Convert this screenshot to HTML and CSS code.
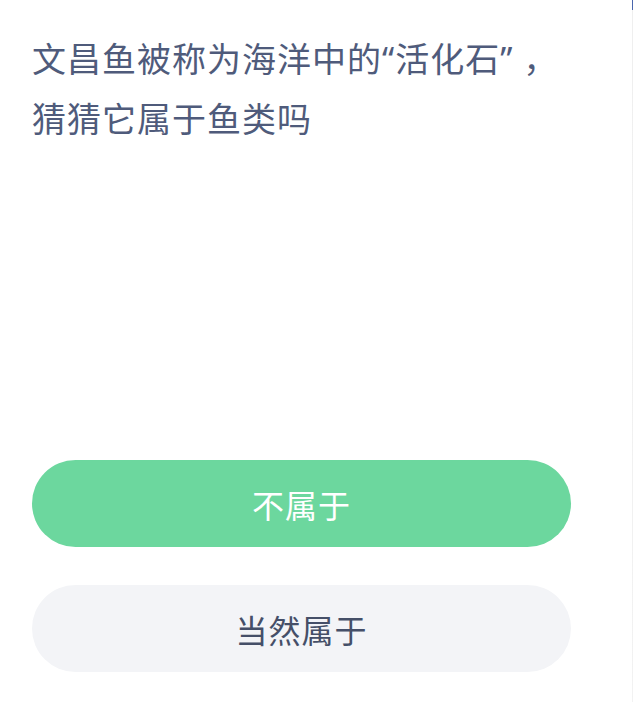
FILE: index.html
```html
<!DOCTYPE html>
<html lang="zh-CN">
<head>
<meta charset="utf-8">
<title>文昌鱼</title>
<link rel="stylesheet" href="styles.css">
</head>
<body>
<div class="page">
  <main class="main">
    <h1 class="question">文昌鱼被称为海洋中的“活化石” <span class="punct">，</span><br>猜猜它属于鱼类吗</h1>
    <div class="answers">
      <button class="answer answer-primary">不属于</button>
      <button class="answer answer-secondary">当然属于</button>
    </div>
  </main>
  <div class="edge"></div>
</div>
</body>
</html>
```
FILE: styles.css
```css
html, body {
  margin: 0;
  padding: 0;
  background: #ffffff;
}
body {
  font-family: "Noto Sans CJK SC", "Noto Sans", sans-serif;
}
.page {
  display: flex;
  min-height: 702px;
}
.main {
  flex: 1;
  padding: 28px 0 0 32px;
}
.edge {
  width: 1px;
  background: linear-gradient(#4a66ad 0, #4a66ad 10px, #efefef 10px, #f2f2f2 100%);
}
.question {
  margin: 0;
  font-family: "Noto Sans", "Noto Sans CJK SC", sans-serif;
  font-size: 34px;
  font-weight: 400;
  line-height: 60px;
  letter-spacing: 1px;
  color: #4f5b7b;
}
.punct {
  font-family: "Noto Sans CJK TC", sans-serif;
}
.answers {
  margin-top: 311px;
  display: flex;
  flex-direction: column;
  gap: 38px;
  width: 539px;
}
.answer {
  height: 87px;
  border: none;
  border-radius: 44px;
  font-family: "Noto Sans CJK SC", "Noto Sans", sans-serif;
  font-size: 32px;
  font-weight: 400;
  padding: 0;
  letter-spacing: 1px;
}
.answer-primary {
  background: #6cd79e;
  color: #ffffff;
}
.answer-secondary {
  background: #f3f4f7;
  color: #454f68;
}
```
